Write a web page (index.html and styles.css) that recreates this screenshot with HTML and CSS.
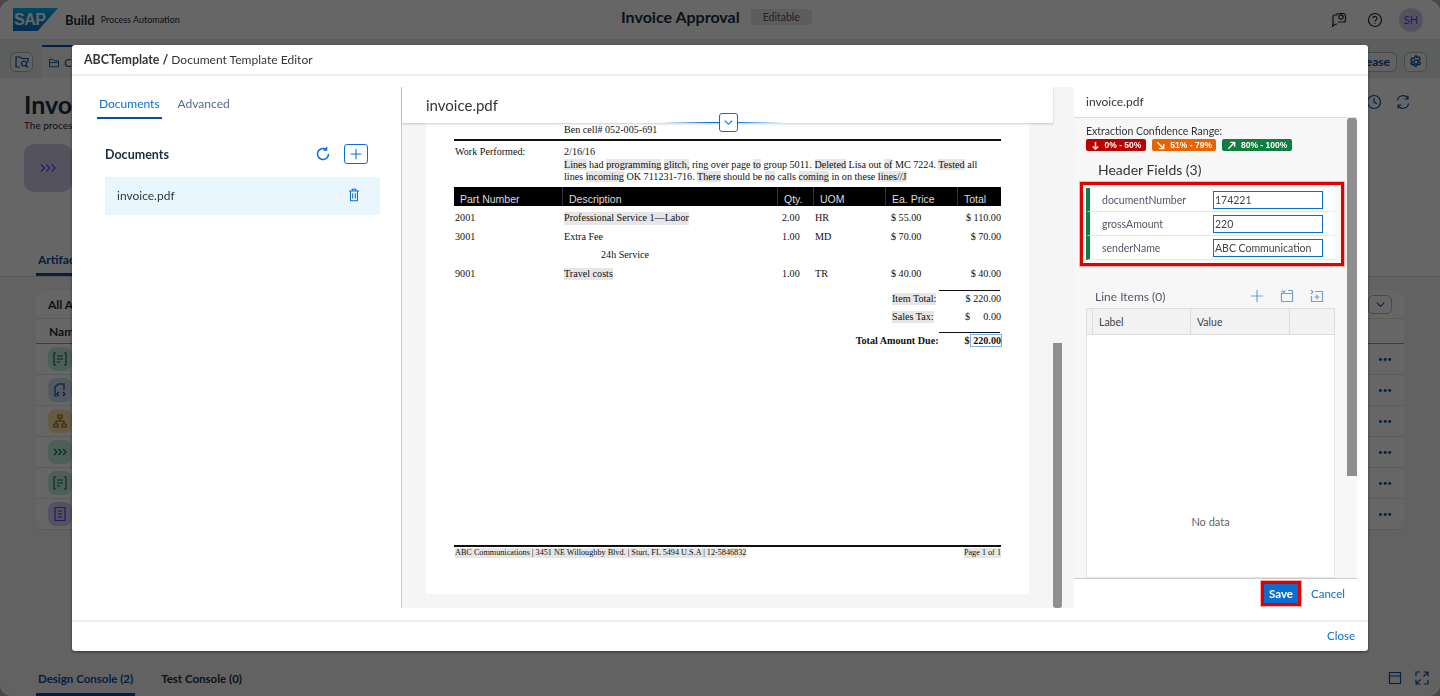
FILE: index.html
```html
<!DOCTYPE html>
<html>
<head>
<meta charset="utf-8"/>
<title>Invoice Approval</title>
<link rel="stylesheet" href="styles.css">
</head>
<body>

<!-- application behind the dialog -->
<div class="app">
	<div class="topbar">
		<div class="brand">
			<div class="saplogo">SAP</div>
			<b>Build</b>
			<span class="brandsub">Process Automation</span>
		</div>
		<div class="toptitle"><b>Invoice Approval</b><span class="tag">Editable</span></div>
		<div class="topicons">
			<svg class="ic dark" viewBox="0 0 16 16"><path d="M5 3H3.500A1.500 1.500 0 0 0 2 4.500v6L1.500 14 5 12h1"/><circle cx="10" cy="5" r="2.200"/><path d="M5 3.500Q5.500 1.500 8 1.500h4q2.500 0 2.500 2.500v4q0 2-2 2H7"/></svg>
			<svg class="ic dark" viewBox="0 0 16 16"><circle cx="8" cy="8" r="6.500"/><path d="M6 6.300a2 2 0 1 1 3 1.700q-1 .6-1 1.500M8 11.200v.8"/></svg>
			<div class="avatar">SH</div>
		</div>
	</div>
	<div class="subbar">
		<div class="toolbtn"><svg class="ic" viewBox="0 0 16 16"><path d="M6 13H2V3h4l1.500 1.500H14v4"/><circle cx="10" cy="9.500" r="2.500"/><path d="M12 11.500l2 2"/></svg></div>
		<div class="filetab"><svg class="ic" viewBox="0 0 16 16"><path d="M2 13V3h4l1.500 2H14v8zM2 7.500h12"/></svg><span class="filename">Overview</span></div>
		<div class="subright">
			<div class="toolbtn wide">Release</div>
			<div class="toolbtn"><svg class="ic" viewBox="0 0 16 16"><circle cx="8" cy="8" r="2.200"/><path d="M8 1.500l1 2 2.200-.5 1 1.800-1.500 1.700.1 1 1.700 1.500-1 1.800-2.300-.5-1.200 2H7l-1-2-2.200.5-1-1.800L4.300 9V7.500L2.800 5.800l1-1.800L6 4.500z"/></svg></div>
		</div>
	</div>
	<div class="hero">
		<div class="herohead">
			<div class="herotext">
				<h1>Invoice Approval</h1>
				<p>The process</p>
			</div>
			<div class="heroicons">
				<svg class="ic" viewBox="0 0 16 16"><circle cx="8" cy="8" r="6.500"/><path d="M8 4v4l3 2"/></svg>
				<svg class="ic" viewBox="0 0 16 16"><path d="M2.500 6.500A5.500 5.500 0 0 1 13 5M13.500 9.500A5.500 5.500 0 0 1 3 11M13 1.500V5H9.500M3 14.500V11h3.500"/></svg>
			</div>
		</div>
		<div class="herotile"><svg class="ic" viewBox="0 0 18 12"><path d="M1 2l4 4-4 4M7 2l4 4-4 4M13 2l4 4-4 4"/></svg></div>
	</div>
	<div class="apptabs"><span class="apptab">Artifacts</span></div>
	<div class="card">
		<div class="cardhead"><b>All Artifacts</b><span class="ddbtn"><svg class="ic" viewBox="0 0 12 12"><path d="M2 4l4 4 4-4"/></svg></span></div>
		<div class="cardcols">Name</div>
		<div class="cardrow"><span class="tile green"><svg class="ic" viewBox="0 0 16 16"><path d="M4 2H2v12h2M12 2h2v12h-2M5 5h6M5 8h6M5 11h3"/></svg></span><span class="dots">•••</span></div>
		<div class="cardrow"><span class="tile blue"><svg class="ic" viewBox="0 0 16 16"><path d="M5 14H3V5l3-3h6v6M7 10l-2 2 2 2M11 10l2 2-2 2"/></svg></span><span class="dots">•••</span></div>
		<div class="cardrow"><span class="tile yellow"><svg class="ic" viewBox="0 0 16 16"><path d="M6 2h4v3H6zM2 11h4v3H2zM10 11h4v3h-4zM8 5v3M4 11V8h8v3"/></svg></span><span class="dots">•••</span></div>
		<div class="cardrow"><span class="tile green"><svg class="ic" viewBox="0 0 16 16"><path d="M2 5l3 3-3 3M6.500 5l3 3-3 3M11 5l3 3-3 3"/></svg></span><span class="dots">•••</span></div>
		<div class="cardrow"><span class="tile green"><svg class="ic" viewBox="0 0 16 16"><path d="M4 2H2v12h2M12 2h2v12h-2M5 5h6M5 8h6M5 11h3"/></svg></span><span class="dots">•••</span></div>
		<div class="cardrow"><span class="tile purple"><svg class="ic" viewBox="0 0 16 16"><path d="M3 1.500h10v13H3zM6 5h4M6 8h4M6 11h4"/></svg></span><span class="dots">•••</span></div>
	</div>
	<div class="console">
		<span class="contab active">Design Console (2)</span>
		<span class="contab">Test Console (0)</span>
		<div class="conicons">
			<svg class="ic" viewBox="0 0 16 16"><path d="M2.500 2.500h11v11h-11zM2.500 6h11"/></svg>
			<svg class="ic" viewBox="0 0 16 16"><path d="M9.500 2H14v4.500M2 9.500V14h4.500M2 6V2h4M14 10v4h-4M13.500 2.500L9.500 6.500M2.500 13.500l4-4"/></svg>
		</div>
	</div>
</div>

<!-- dialog -->
<div class="overlay">
	<div class="dialog">
		<div class="dlgtitle"><b>ABCTemplate /</b> Document Template Editor</div>
		<div class="dlgbody">

			<div class="leftcol">
				<div class="tabs">
					<span class="tab selected">Documents</span>
					<span class="tab">Advanced</span>
				</div>
				<div class="dochead">
					<b>Documents</b>
					<svg class="ic refresh" viewBox="0 0 16 16"><path d="M13.500 8A5.500 5.500 0 1 1 11 3.400M11.500 1v3h-3"/></svg>
					<span class="addbtn"><svg class="ic" viewBox="0 0 16 16"><path d="M8 2v12M2 8h12"/></svg></span>
				</div>
				<div class="docitem">
					invoice.pdf
					<svg class="ic" viewBox="0 0 16 16"><path d="M2.500 3.500h11M6 3.500V1.500h4v2M4 3.500V14.500h8v-11M6.500 6v6M9.500 6v6"/></svg>
				</div>
			</div>

			<div class="midcol">
				<div class="viewer">
					<div class="viewerhead">invoice.pdf</div>
					<div class="splitter"><span class="splitbtn"><svg class="ic" viewBox="0 0 12 12"><path d="M2 4l4 4 4-4"/></svg></span></div>
					<div class="pdfscroll">
						<div class="pdfpage">
							<div class="pdfline indent">Ben cell# 052-005-691</div>
							<div class="rule"></div>
							<div class="workrow">
								<div>Work Performed:</div>
								<div>
									2/16/16<br>
									<span class="hl">Lines</span> had <span class="hl">programming</span> <span class="hl">glitch,</span> ring over page <span class="hl">to</span> group 5011. <span class="hl">Deleted</span> Lisa out <span class="hl">of</span> MC 7224. <span class="hl">Tested</span> all<br>
									lines <span class="hl">incoming</span> OK 711231-716. <span class="hl">There</span> should be <span class="hl">no</span> calls <span class="hl">coming</span> in on these <span class="hl">lines//J</span>
								</div>
							</div>
							<div class="itemhead">
								<span>Part Number</span><span>Description</span><span>Qty.</span><span>UOM</span><span>Ea. Price</span><span>Total</span>
							</div>
							<div class="itemrow"><span>2001</span><span class="hl-text">Professional Service 1—Labor</span><span>2.00</span><span>HR</span><span>$ 55.00</span><span class="num">$ 110.00</span></div>
							<div class="itemrow"><span>3001</span><span>Extra Fee</span><span>1.00</span><span>MD</span><span>$ 70.00</span><span class="num">$ 70.00</span></div>
							<div class="itemrow"><span></span><span class="sub">24h Service</span></div>
							<div class="itemrow"><span>9001</span><span class="hl-text">Travel costs</span><span>1.00</span><span>TR</span><span>$ 40.00</span><span class="num">$ 40.00</span></div>
							<div class="totalrule first"></div>
							<div class="totalrow"><span class="hl">Item Total:</span><span class="amount">$ 220.00</span></div>
							<div class="totalrow"><span class="hl">Sales Tax:</span><span class="amount spread"><span>$</span><span>0.00</span></span></div>
							<div class="totalrule"></div>
							<div class="grandrow"><b>Total Amount Due:</b><b>$<span class="selbox"> 220.00</span></b></div>
							<div class="rule bottom"></div>
							<div class="pdffoot"><span class="hl">ABC Communications | 3451 NE Willoughby Blvd. | Sturt, FL 5494 U.S.A | 12-5846832</span><span class="hl">Page 1 of 1</span></div>
						</div>
					</div>
				</div>
				<div class="vtrack"><div class="vthumb"></div></div>
			</div>

			<div class="rightcol">
				<div class="righthead">invoice.pdf</div>
				<div class="rightscroll">
					<div class="rightinner">
						<div class="rangelabel">Extraction Confidence Range:</div>
						<div class="badges">
							<span class="badge red"><svg class="ic" viewBox="0 0 10 10"><path d="M5 1v8M2 6l3 3 3-3"/></svg>0% - 50%</span>
							<span class="badge orange"><svg class="ic" viewBox="0 0 10 10"><path d="M1.500 1.500l7 7M8.500 3.500v5h-5"/></svg>51% - 79%</span>
							<span class="badge greenb"><svg class="ic" viewBox="0 0 10 10"><path d="M1.500 8.500l7-7M3.500 1.500h5v5"/></svg>80% - 100%</span>
						</div>
						<div class="hfields">Header Fields (3)</div>
						<div class="redbox">
							<div class="field"><label>documentNumber</label><span class="val">174221</span></div>
							<div class="field"><label>grossAmount</label><span class="val">220</span></div>
							<div class="field"><label>senderName</label><span class="val">ABC Communication</span></div>
						</div>
						<div class="lihead">
							<span>Line Items (0)</span>
							<svg class="ic" viewBox="0 0 14 14"><path d="M7 1v12M1 7h12"/></svg>
							<svg class="ic" viewBox="0 0 14 14"><path d="M1.500 1.500l2 2 2-2M8 1.500h4.500v11h-11v-8h11"/></svg>
							<svg class="ic" viewBox="0 0 14 14"><path d="M1 1l2 2-2 2M5 2.500h7.500v10h-11V7M7 5.500v5M4.500 8h5"/></svg>
						</div>
						<div class="litable">
							<div class="lithead"><span></span><span>Label</span><span>Value</span><span></span></div>
							<div class="libody">No data</div>
						</div>
					</div>
					<div class="rthumb"></div>
				</div>
				<div class="rightfoot">
					<span class="savewrap"><span class="savebtn">Save</span></span>
					<span class="cancel">Cancel</span>
				</div>
			</div>

		</div>
		<div class="dlgfoot"><span>Close</span></div>
	</div>
</div>

</body>
</html>
```

FILE: styles.css
```css
* {
box-sizing: border-box;
}
html, body {
margin: 0;
height: 696px;
overflow: hidden;
background: #b4b4b4;
font-family: Lato, "Liberation Sans", sans-serif;
color: #1d2d3e;
}
.ic {
width: 16px;
height: 16px;
flex: none;
fill: none;
stroke: currentColor;
stroke-width: 1.2;
}

/* application behind the dialog */
.app {
height: 696px;
display: flex;
flex-direction: column;
background: #f5f6f7;
border-radius: 12px;
overflow: hidden;
}
.topbar {
height: 39px;
flex: none;
display: flex;
align-items: center;
justify-content: space-between;
padding: 0 17px 0 13px;
background: #fff;
position: relative;
}
.brand {
display: flex;
align-items: center;
font-size: 13px;
}
.saplogo {
width: 45px;
height: 23px;
background: linear-gradient(#00b8f1, #0a6ed1);
clip-path: polygon(0 0, 100% 0, 55% 100%, 0 100%);
color: #fff;
font: bold 16px/23px "Liberation Sans", sans-serif;
letter-spacing: -0.5px;
padding-left: 1px;
margin-right: 7px;
}
.brandsub {
font-size: 9px;
margin-left: 6px;
}
.toptitle {
position: absolute;
left: 621px;
top: 7px;
display: flex;
align-items: center;
gap: 11px;
font-size: 16px;
}
.tag {
background: #e8e8e8;
font-size: 10.500px;
padding: 2px 12px;
border-radius: 3px;
color: #556;
}
.topicons {
display: flex;
align-items: center;
gap: 20px;
}
.dark {
color: #1d2d3e;
}
.avatar {
width: 24px;
height: 24px;
margin-left: -4px;
border-radius: 50%;
background: #d5cdf0;
color: #5d36ff;
font-size: 11px;
line-height: 24px;
text-align: center;
}
.subbar {
height: 39px;
flex: none;
display: flex;
align-items: center;
padding: 6px 13px 0 10px;
background: #e9eaeb;
}
.toolbtn {
height: 20px;
width: 23px;
border: 1px solid #b0b8c0;
border-radius: 6px;
display: flex;
align-items: center;
justify-content: center;
color: #0a4ea1;
background: #f5f6f7;
}
.toolbtn.wide {
width: auto;
padding: 0 6px;
font-size: 12px;
font-weight: bold;
}
.filetab {
height: 33px;
margin-left: 9px;
padding: 0 6px;
display: flex;
align-items: center;
gap: 4px;
border-top: 2px solid #0a4ea1;
color: #0a4ea1;
font-size: 12px;
background: #f5f6f7;
}
.filetab .ic {
width: 12px;
height: 12px;
}
.filename {
width: 7px;
overflow: hidden;
}
.subright {
margin-left: auto;
display: flex;
gap: 7px;
}
.hero {
height: 157px;
flex: none;
padding: 11px 29px 0 24px;
background: #fff;
}
.herohead {
display: flex;
justify-content: space-between;
}
.herotext {
width: 48px;
overflow: hidden;
white-space: nowrap;
}
.hero h1 {
margin: 0;
font-size: 25px;
line-height: 30px;
}
.hero p {
margin: 0;
font-size: 10px;
}
.heroicons {
display: flex;
gap: 13px;
color: #0a4ea1;
margin-top: 5px;
}
.herotile {
width: 48px;
height: 48px;
margin-top: 13px;
border-radius: 10px;
background: #d5cdf0;
color: #5d36ff;
display: flex;
align-items: center;
justify-content: center;
}
.apptabs {
height: 42px;
flex: none;
padding-left: 36px;
display: flex;
align-items: flex-end;
background: #fff;
border-bottom: 1px solid #d9d9d9;
}
.apptab {
padding: 0 2px 6px;
border-bottom: 3px solid #0a4ea1;
color: #0a4ea1;
font-size: 12px;
font-weight: bold;
}
.card {
margin: 13px 36px 0;
height: 240px;
flex: none;
background: #fff;
border-radius: 10px;
font-size: 12px;
}
.cardhead {
height: 29px;
padding: 0 12px;
display: flex;
align-items: center;
justify-content: space-between;
border-bottom: 1px solid #e5e5e5;
}
.ddbtn {
width: 24px;
height: 19px;
border: 1px solid #b0b8c0;
border-radius: 5px;
color: #0a4ea1;
display: flex;
align-items: center;
justify-content: center;
}
.ddbtn .ic {
width: 11px;
height: 11px;
}
.cardcols {
height: 25px;
padding: 5px 13px 0;
border-bottom: 1px solid #999;
font-weight: bold;
}
.cardrow {
height: 31px;
padding: 0 12px;
display: flex;
align-items: center;
justify-content: space-between;
border-bottom: 1px solid #e5e5e5;
}
.tile {
width: 24px;
height: 24px;
border-radius: 8px;
display: flex;
align-items: center;
justify-content: center;
}
.tile.green {
background: #c2eadb;
color: #0f6b5a;
}
.tile.blue {
background: #cfe0f5;
color: #0a4ea1;
}
.tile.yellow {
background: #f8e3a8;
color: #a45c00;
}
.tile.purple {
background: #d5cdf0;
color: #5d36ff;
}
.dots {
font-size: 8px;
color: #0a4ea1;
}
.console {
margin-top: auto;
height: 36px;
flex: none;
display: flex;
align-items: center;
gap: 24px;
padding: 0 10px 0 36px;
background: #f5f6f7;
font-size: 11.500px;
font-weight: bold;
}
.contab {
display: block;
height: 36px;
line-height: 38px;
padding: 0 2px;
}
.contab.active {
color: #0a4ea1;
border-bottom: 3px solid #0a4ea1;
}
.conicons {
margin-left: auto;
display: flex;
gap: 11px;
color: #0a4ea1;
}

/* dialog */
.overlay {
position: fixed;
top: 0;
left: 0;
right: 0;
bottom: 0;
background: rgba(0, 0, 0, 0.6);
display: flex;
align-items: center;
justify-content: center;
}
.dialog {
width: 1296px;
height: 606px;
background: #fff;
border-radius: 3px;
display: flex;
flex-direction: column;
overflow: hidden;
box-shadow: 0 1px 3px rgba(0, 0, 0, 0.5);
}
.dlgtitle {
height: 31px;
flex: none;
padding: 7px 12px 0;
border-bottom: 2px solid #eee;
font-size: 12.050px;
line-height: 16px;
color: #32363a;
}
.dlgtitle b {
font-size: 12.400px;
}
.dlgbody {
flex: 1;
display: flex;
padding: 11px 11px 12px 0;
min-height: 0;
}
.dlgfoot {
height: 31px;
flex: none;
border-top: 2px solid #eee;
padding: 7px 13px 0 0;
text-align: right;
font-size: 11.500px;
color: #0a6ed1;
}

/* left column */
.leftcol {
width: 329px;
flex: none;
padding: 0 21px 0 25px;
}
.tabs {
display: flex;
gap: 14px;
height: 32px;
}
.tab {
font-size: 12px;
padding: 0 2px;
height: 32px;
line-height: 33px;
color: #556b82;
}
.tab.selected {
color: #0a6ed1;
border-bottom: 2px solid #0a4ea1;
}
.dochead {
display: flex;
align-items: center;
margin: 25px 0 0 8px;
height: 20px;
font-size: 12.500px;
}
.dochead b {
flex: 1;
}
.refresh {
color: #0a6ed1;
margin-right: 13px;
stroke-width: 1.500;
}
.addbtn {
width: 24px;
height: 20px;
border: 1px solid #0a6ed1;
border-radius: 3px;
color: #0a6ed1;
display: flex;
align-items: center;
justify-content: center;
margin-right: 12px;
}
.addbtn .ic {
width: 14px;
height: 14px;
}
.docitem {
margin: 13px 0 0 8px;
height: 38px;
background: #e9f6fe;
display: flex;
align-items: center;
justify-content: space-between;
padding: 0 19px 2px 12px;
font-size: 12px;
color: #32363a;
}
.docitem .ic {
color: #0a6ed1;
width: 14px;
height: 14px;
}

/* middle column */
.midcol {
width: 673px;
flex: none;
display: flex;
background: #f5f5f5;
border-left: 1px solid #ccc;
}
.viewer {
width: 651px;
flex: none;
display: flex;
flex-direction: column;
position: relative;
}
.viewerhead {
height: 36px;
flex: none;
background: #fff;
padding: 8px 0 0 24px;
font-size: 15px;
line-height: 20px;
color: #32363a;
box-shadow: 0 1px 2px rgba(0, 0, 0, 0.2);
position: relative;
z-index: 1;
}
.splitter {
position: absolute;
left: 258px;
top: 35px;
width: 124px;
height: 1px;
background: linear-gradient(90deg, transparent, #0a6ed1 40%, #0a6ed1 60%, transparent);
z-index: 2;
}
.splitbtn {
position: absolute;
left: 59px;
top: -9px;
width: 19px;
height: 19px;
background: #fff;
border: 1px solid #0a6ed1;
border-radius: 3px;
color: #0a6ed1;
display: flex;
align-items: center;
justify-content: center;
}
.splitbtn .ic {
width: 11px;
height: 11px;
}
.pdfscroll {
flex: 1;
overflow: hidden;
padding-left: 24px;
}
.pdfpage {
width: 603px;
height: 471px;
background: #fff;
padding: 1px 28px 0 28px;
font: 10.150px/12px "Liberation Serif", serif;
color: #111;
}
.pdfline.indent {
margin-left: 110px;
}
.hl, .hl-text {
background: #e6e6e6;
}
.hl-text {
justify-self: start;
}
.rule {
height: 2px;
margin-top: 3px;
background: #111;
}
.rule.bottom {
margin-top: 196px;
}
.workrow {
display: grid;
grid-template-columns: 109px 1fr;
margin-top: 5px;
padding-left: 1px;
line-height: 12.500px;
}
.itemhead {
margin-top: 3px;
height: 19.500px;
background: #000;
color: #ddd;
display: grid;
grid-template-columns: 108px 215px 36px 72px 72px 44px;
font: 10.500px/24px "Liberation Sans", sans-serif;
overflow: hidden;
}
.itemhead span {
padding-left: 6px;
border-left: 1px solid #333;
}
.itemhead span:first-child {
border-left: 0;
}
.itemrow {
display: grid;
grid-template-columns: 109px 218px 33px 76px 51px 59px;
height: 18.500px;
line-height: 12px;
padding-top: 6px;
padding-left: 1px;
}
.num {
text-align: right;
}
.sub {
margin-left: 37px;
}
.totalrule {
height: 1px;
width: 61px;
margin-left: 485px;
background: #111;
margin-top: 5px;
}
.totalrule.first {
margin-top: 10px;
}
.totalrow {
display: grid;
grid-template-columns: 73px 36px;
align-items: start;
margin-left: 438px;
width: 109px;
height: 18px;
padding-top: 2px;
}
.totalrow .hl {
width: fit-content;
}
.amount {
text-align: right;
white-space: nowrap;
}
.spread {
display: flex;
justify-content: space-between;
}
.grandrow {
display: flex;
justify-content: flex-end;
gap: 26px;
margin-top: 2px;
height: 14px;
}
.selbox {
border: 1px solid #7fb0e6;
margin-right: -1px;
}
.pdffoot {
display: flex;
align-items: flex-start;
justify-content: space-between;
font-size: 8.200px;
line-height: 10px;
padding: 1px 0 0 1px;
}
.vtrack {
flex: 1;
}
.vthumb {
width: 9px;
height: 265px;
margin-top: 256px;
background: #8f8f8f;
border-radius: 0 0 3px 3px;
}

/* right column */
.rightcol {
flex: 1;
min-width: 0;
display: flex;
flex-direction: column;
}
.righthead {
height: 31px;
flex: none;
padding: 7px 0 0 12px;
font-size: 12px;
color: #32363a;
border-bottom: 1px solid #ddd;
}
.rightscroll {
flex: 1;
min-height: 0;
display: flex;
background: #f7f7f7;
overflow: hidden;
}
.rightinner {
width: 273px;
flex: none;
padding: 7px 0 0 12px;
display: flex;
flex-direction: column;
}
.rthumb {
width: 10px;
height: 358px;
background: #8f8f8f;
border-radius: 3px 3px 0 0;
}
.rangelabel {
font-size: 10.500px;
line-height: 13px;
margin-bottom: 1px;
color: #32363a;
}
.badges {
display: flex;
gap: 6px;
}
.badge {
height: 12px;
padding: 0 4.500px;
border-radius: 2px;
color: #fff;
font: bold 8.500px/12px "Liberation Sans", sans-serif;
display: flex;
align-items: center;
gap: 5px;
}
.badge .ic {
width: 9px;
height: 9px;
stroke-width: 1.600;
}
.badge.red {
background: #bb0000;
}
.badge.orange {
background: #e76500;
}
.badge.greenb {
background: #107e3e;
}
.hfields {
margin: 9px 0 0 12px;
font-size: 14px;
line-height: 20px;
color: #32363a;
}
.redbox {
margin: 2px 0 0 -6px;
width: 264px;
height: 84px;
border: 3px solid #e00000;
outline: 1px solid #f4b0b0;
padding: 3px 6px 0 3px;
background: #f7f7f7;
}
.field {
height: 24px;
background: #fff;
border-left: 4px solid #107e3e;
border-bottom: 1px solid #e8e8e8;
display: flex;
align-items: center;
font-size: 10.500px;
color: #556;
}
.field label {
width: 123px;
padding-left: 12px;
flex: none;
}
.val {
width: 110px;
height: 18px;
border: 1.500px solid #0a6ed1;
padding-left: 1px;
line-height: 16px;
background: #fff;
color: #444;
}
.lihead {
margin: 22px 0 0 9px;
height: 16px;
padding-right: 7px;
display: flex;
align-items: center;
font-size: 12px;
color: #556;
}
.lihead span {
flex: 1;
}
.lihead .ic {
width: 14px;
height: 14px;
color: #6ea3d9;
margin-right: 16px;
}
.litable {
margin-top: 4px;
width: 249px;
flex: 1;
display: flex;
flex-direction: column;
}
.lithead {
height: 27px;
flex: none;
display: grid;
grid-template-columns: 5px 98px 99px 1fr;
background: #f2f2f2;
border: 1px solid #ddd;
font-size: 10.500px;
line-height: 26px;
color: #444;
}
.lithead span {
border-left: 1px solid #ddd;
padding-left: 6px;
}
.lithead span:first-child {
border-left: 0;
}
.libody {
flex: 1;
background: #fff;
border: 1px solid #e5e5e5;
border-top: 0;
text-align: center;
padding-top: 180px;
font-size: 11px;
color: #666;
}
.rightfoot {
height: 30px;
flex: none;
background: #fff;
border-top: 1px solid #ccc;
display: flex;
align-items: center;
justify-content: flex-end;
gap: 10px;
padding-right: 12px;
}
.savewrap {
width: 40px;
height: 25px;
border: 3px solid #e00000;
outline: 1px solid #f4b0b0;
}
.savebtn {
display: block;
height: 19px;
background: #0a6ed1;
color: #fff;
font: bold 11.500px/19px Lato, sans-serif;
text-align: center;
}
.cancel {
font-size: 11.500px;
color: #0a6ed1;
}
```
